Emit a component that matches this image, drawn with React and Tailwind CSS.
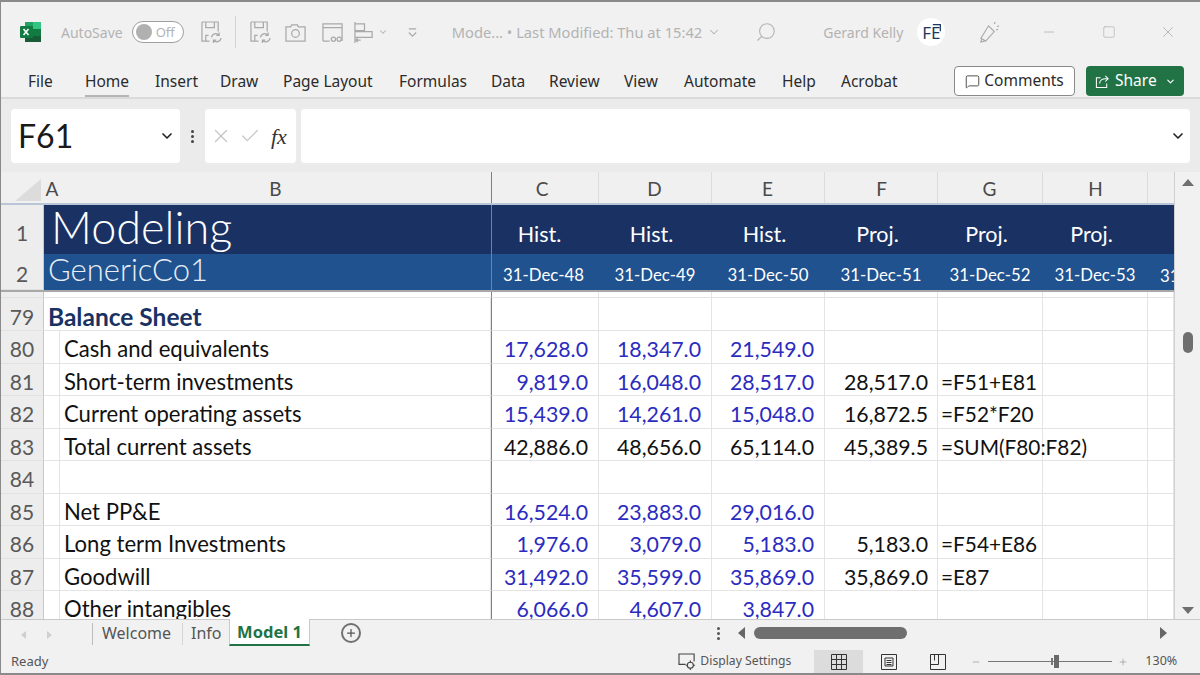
import { ChevronDown, Search, X, Check, Minus, Square, Plus, MessageSquare } from "lucide-react";

const GRID = "grid grid-cols-[43px_16px_431px_108px_113px_113px_113px_105px_105px_26px] shrink-0";
const TABS = [
  ["Home", "w-[70px]"],
  ["Insert", "w-[65px]"],
  ["Draw", "w-[63px]"],
  ["Page Layout", "w-[116px]"],
  ["Formulas", "w-[92px]"],
  ["Data", "w-[58px]"],
  ["Review", "w-[75px]"],
  ["View", "w-[60px]"],
  ["Automate", "w-[98px]"],
  ["Help", "w-[59px]"],
  ["Acrobat", "w-[70px]"],
];

const BLUE = "text-[#2b2bbf]";
const rows = [
  { n: 80, label: "Cash and equivalents", vals: ["17,628.0", "18,347.0", "21,549.0"] },
  { n: 81, label: "Short-term investments", vals: ["9,819.0", "16,048.0", "28,517.0"], f: "28,517.0", g: "=F51+E81" },
  { n: 82, label: "Current operating assets", vals: ["15,439.0", "14,261.0", "15,048.0"], f: "16,872.5", g: "=F52*F20" },
  { n: 83, label: "Total current assets", vals: ["42,886.0", "48,656.0", "65,114.0"], black: true, f: "45,389.5", g: "=SUM(F80:F82)" },
  { n: 84, label: "", vals: ["", "", ""] },
  { n: 85, label: "Net PP&E", vals: ["16,524.0", "23,883.0", "29,016.0"] },
  { n: 86, label: "Long term Investments", vals: ["1,976.0", "3,079.0", "5,183.0"], f: "5,183.0", g: "=F54+E86" },
  { n: 87, label: "Goodwill", vals: ["31,492.0", "35,599.0", "35,869.0"], f: "35,869.0", g: "=E87" },
  { n: 88, label: "Other intangibles", vals: ["6,066.0", "4,607.0", "3,847.0"] },
];

const headers = [
  ["C", "Hist.", "31-Dec-48"],
  ["D", "Hist.", "31-Dec-49"],
  ["E", "Hist.", "31-Dec-50"],
  ["F", "Proj.", "31-Dec-51"],
  ["G", "Proj.", "31-Dec-52"],
  ["H", "Proj.", "31-Dec-53"],
];

function SaveSync({ className }) {
  return (
    <svg viewBox="0 0 22 24" className={className} fill="none" stroke="#a9a9a9" strokeWidth="1.3">
      <path d="M1 1h17v10M1 1v20h8M5 1v6h9V1M5 21v-6h3" />
      <path d="M11 17a4.5 4.5 0 0 1 8-2M21 18a4.5 4.5 0 0 1-8 2M19 12v3h-3M13 23v-3h3" />
    </svg>
  );
}

function Excel() {
  return (
    <svg viewBox="0 0 22 22" className="w-[22px] h-[22px]">
      <rect x="5" y="1" width="16" height="20" rx="1.5" fill="#21a366" />
      <rect x="5" y="1" width="8" height="7" fill="#21a366" />
      <rect x="13" y="1" width="8" height="7" fill="#33c481" />
      <rect x="13" y="8" width="8" height="7" fill="#107c41" />
      <rect x="5" y="15" width="16" height="6" fill="#185c37" />
      <rect x="0" y="5" width="13" height="12" rx="1" fill="#107c41" />
      <path d="M3.5 8l5 6M8.5 8l-5 6" stroke="#fff" strokeWidth="1.6" />
    </svg>
  );
}

function TitleBar() {
  return (
    <div className="h-[58px] shrink-0 flex items-center bg-[#f1f1f1] text-[#b3b3b3] text-[14px] pt-[2px]">
      <div className="ml-[19px]"><Excel /></div>
      <span className="ml-[19px]">AutoSave</span>
      <div className="ml-[9px] w-[52px] h-[22px] rounded-full border border-[#9f9f9f] bg-white flex items-center px-[3px] gap-[4px]">
        <div className="w-[16px] h-[16px] rounded-full bg-[#b0b0b0]" />
        <span className="text-[13px] leading-none">Off</span>
      </div>
      <SaveSync className="ml-[17px] w-[21px] h-[23px]" />
      <div className="ml-[13px] w-px h-[32px] bg-[#d2d2d2]" />
      <SaveSync className="ml-[14px] w-[21px] h-[23px]" />
      <svg viewBox="0 0 22 22" className="ml-[14px] w-[21px] h-[21px]" fill="none" stroke="#a9a9a9" strokeWidth="1.3">
        <path d="M1 5h5l1-2h6l1 2h7v15H1z" />
        <circle cx="11" cy="12" r="4" />
      </svg>
      <svg viewBox="0 0 22 22" className="ml-[16px] w-[21px] h-[21px]" fill="none" stroke="#a9a9a9" strokeWidth="1.3">
        <path d="M1 20V2h20v18M1 6h20M1 20h7" />
        <circle cx="12" cy="18" r="2.2" />
        <circle cx="18" cy="18" r="2.2" />
      </svg>
      <svg viewBox="0 0 22 24" className="ml-[11px] w-[21px] h-[23px]" fill="none" stroke="#a9a9a9" strokeWidth="1.3">
        <path d="M1 1v22M1 3h10v7H1M1 11h18v6H1M7 20H2l2-2M2 20l2 2" />
      </svg>
      <ChevronDown className="ml-[3px] w-[10px] h-[10px]" strokeWidth={2.5} />
      <svg viewBox="0 0 12 12" className="ml-[19px] w-[11px] h-[11px]" fill="none" stroke="#a9a9a9" strokeWidth="1.2">
        <path d="M2 2h8M2 6l4 4 4-4" />
      </svg>
      <span className="ml-[34px] whitespace-nowrap text-[14.7px]">Mode... • Last Modified: Thu at 15:42</span>
      <ChevronDown className="ml-[5px] w-[14px] h-[14px]" strokeWidth={1.8} />
      <Search className="ml-[34px] w-[22px] h-[22px] -scale-x-100" strokeWidth={1.2} />
      <span className="ml-[46px] whitespace-nowrap">Gerard Kelly</span>
      <div className="ml-[14px] w-[28px] h-[28px] rounded-full bg-white flex items-center justify-center text-[#1b3a63] text-[17px] leading-none relative">
        <span>FE</span>
        <svg viewBox="0 0 12 12" className="absolute top-[5px] right-[3px] w-[10px] h-[10px]" fill="none" stroke="#1b3a63" strokeWidth="1.5">
          <path d="M1 2h9v8" />
        </svg>
      </div>
      <svg viewBox="0 0 22 24" className="ml-[34px] w-[21px] h-[23px]" fill="none" stroke="#a9a9a9" strokeWidth="1.2">
        <path d="M10 5l6 6-9 10-5-3zM3 18l-1 4 4-1M16 3l1-2M19 6l2-1M18 9h2" />
      </svg>
      <Minus className="ml-[41px] w-[16px] h-[16px]" strokeWidth={1.2} />
      <Square className="ml-[45px] w-[14px] h-[14px]" strokeWidth={1.2} />
      <X className="ml-[43px] w-[18px] h-[18px]" strokeWidth={1.2} />
    </div>
  );
}

function Ribbon() {
  return (
    <div className="h-[39px] shrink-0 flex items-start pt-[5px] bg-[#f1f1f1] border-b-2 border-[#dadada] text-[#2b2b2b] text-[15.5px]">
      <span className="ml-[27px] mt-[5px] w-[57px]">File</span>
      <div className="flex mt-[5px]">
        {TABS.map(([t, w]) => (
          <div key={t} className={w}>
            <span className={t === "Home" ? "inline-block border-b-2 border-[#b5b5b5] h-[27px] whitespace-nowrap" : "whitespace-nowrap"}>{t}</span>
          </div>
        ))}
      </div>
      <div className="ml-auto flex items-center gap-[11px] mr-[16px] mt-[1px]">
        <div className="w-[121px] h-[30px] rounded-[4px] border border-[#8a8a8a] bg-white flex items-center justify-center gap-[4px]">
          <MessageSquare className="w-[15px] h-[15px]" strokeWidth={1.3} />
          <span>Comments</span>
        </div>
        <div className="w-[98px] h-[30px] rounded-[4px] bg-[#217346] text-white flex items-center pl-[9px]">
          <svg viewBox="0 0 16 16" className="w-[15px] h-[15px]" fill="none" stroke="#fff" strokeWidth="1.1">
            <path d="M6 4H1.5v10.5h11V10" />
            <path d="M5 10c0-3.5 3-5 6-5h3M11 2l3 3-3 3" />
          </svg>
          <span className="ml-[5px]">Share</span>
          <ChevronDown className="ml-[8px] w-[11px] h-[11px]" strokeWidth={2.5} />
        </div>
      </div>
    </div>
  );
}

function FormulaBar() {
  return (
    <div className="h-[73px] shrink-0 bg-[#ebebeb] flex items-start pt-[10px] pl-[10px] pr-[10px]">
      <div className="w-[169px] h-[54px] rounded-[4px] bg-white flex items-center pl-[7px] pr-[5px]">
        <span className="text-[32px] leading-none text-[#1a1a1a] font-[Lato,sans-serif]">F61</span>
        <ChevronDown className="ml-auto w-[16px] h-[16px] text-[#222]" strokeWidth={2.5} />
      </div>
      <div className="w-[25px] h-[54px] flex flex-col items-center justify-center gap-[2px]">
        <div className="w-[3px] h-[3px] rounded-full bg-[#444]" />
        <div className="w-[3px] h-[3px] rounded-full bg-[#444]" />
        <div className="w-[3px] h-[3px] rounded-full bg-[#444]" />
      </div>
      <div className="w-[91px] h-[54px] rounded-[4px] bg-white flex items-center pl-[5px]">
        <X className="w-[22px] h-[22px] text-[#c4c4c4]" strokeWidth={1.3} />
        <Check className="ml-[7px] w-[22px] h-[22px] text-[#c4c4c4]" strokeWidth={1.3} />
        <span className="ml-[10px] text-[22px] italic text-[#333] font-['Liberation_Serif',serif]">fx</span>
      </div>
      <div className="ml-[5px] flex-1 h-[54px] rounded-[4px] bg-white flex items-center justify-end pr-[4px]">
        <ChevronDown className="w-[16px] h-[16px] text-[#222]" strokeWidth={2.5} />
      </div>
    </div>
  );
}

function RowHead({ n, className = "pt-[4px]" }) {
  return (
    <div className={"bg-[#ededed] text-[#595959] text-[21px] leading-none flex items-center justify-center border-b border-[#e2e2e2] border-r border-r-[#c8c8c8] " + className}>
      {n}
    </div>
  );
}

function Cell({ children, className = "" }) {
  return (
    <div className={"border-r border-b border-[#e4e4e4] flex items-center whitespace-nowrap overflow-hidden pt-[5px] leading-[24px] " + className}>
      {children}
    </div>
  );
}

function ColumnHeader() {
  return (
    <div className={GRID + " h-[31px] bg-[#f0f0f0] text-[#4a4a4a] text-[19px]"}>
      <div className="flex items-end justify-end pb-[3px] pr-[3px]">
        <svg viewBox="0 0 26 22" className="w-[26px] h-[22px]"><path d="M26 0v22H0z" fill="#dcdcdc" /></svg>
      </div>
      <div className="flex justify-center items-center pt-[3px]">A</div>
      <div className="flex justify-center items-center pt-[3px]">B</div>
      {headers.map(([l], i) => (
        <div key={l} className={"flex justify-center items-center pt-[3px] border-r border-[#dcdcdc] " + (i === 0 ? "border-l border-l-[#808080] pr-[6px]" : i === 3 || i === 5 ? "pl-[1px]" : "pr-[1px]")}>{l}</div>
      ))}
      <div />
    </div>
  );
}

function TitleRows() {
  return (
    <>
      <div className={GRID + " h-[51px] border-t-2 border-[#b9c6d8]"}>
        <RowHead n={1} className="pt-[5px]" />
        <div className="col-span-2 bg-[#1a3263] text-white text-[45px] font-light leading-none pl-[7px] pb-[6px] flex items-center">Modeling</div>
        {headers.map(([l, t], i) => (
          <div key={l} className={"bg-[#1a3263] text-white text-[21.5px] flex items-center justify-center pt-[8px] " + (i === 0 ? "border-l border-[#808080] pr-[12px]" : "pr-[8px]")}>{t}</div>
        ))}
        <div className="bg-[#1a3263]" />
      </div>
      <div className={GRID + " h-[38px] border-b-2 border-[#a8a8a8]"}>
        <RowHead n={2} className="pt-[3px]" />
        <div className="col-span-2 bg-[#20528f] text-[#e9eef6] text-[31px] font-light leading-none pl-[4px] pb-[5px] flex items-center">GenericCo1</div>
        {headers.map(([l, , d], i) => (
          <div key={l} className={"bg-[#20528f] text-white text-[16.8px] flex items-center justify-center pt-[6px] " + (i === 0 ? "border-l border-[#808080] pr-[4px]" : "pr-[1px]")}>{d}</div>
        ))}
        <div className="bg-[#20528f] text-white text-[16.8px] overflow-hidden pl-[12px] pt-[9px] whitespace-nowrap">31-Dec-54</div>
      </div>
    </>
  );
}

function DataRow({ r }) {
  return (
    <div className={GRID + " h-[32.5px] text-[21.3px] text-[#111]"}>
      <RowHead n={r.n} />
      <Cell />
      <Cell className="pl-[4px] text-[22.1px]">{r.label}</Cell>
      {r.vals.map((v, i) => (
        <Cell key={i} className={"justify-end pr-[10px] " + (r.black ? "" : BLUE + " ") + (i === 0 ? "border-l border-l-[#808080]" : "")}>{v}</Cell>
      ))}
      <Cell className="justify-end pr-[9px]">{r.f}</Cell>
      <div className="border-r border-b border-[#e4e4e4] flex items-center whitespace-nowrap pl-[3px] pt-[5px] leading-[24px] text-[20.8px]">{r.g}</div>
      <Cell />
      <Cell />
    </div>
  );
}

function EmptyCells() {
  return (
    <>
      <div className="border-l border-[#808080] border-r border-r-[#e4e4e4] border-b border-b-[#e4e4e4]" />
      <Cell /><Cell /><Cell /><Cell /><Cell /><Cell />
    </>
  );
}

function Sheet() {
  return (
    <div className="flex-1 min-h-0 flex bg-white font-[Lato,sans-serif]">
      <div className="w-[1173px] shrink-0 overflow-hidden flex flex-col">
        <ColumnHeader />
        <TitleRows />
        <div className={GRID + " h-[6px]"}>
          <RowHead className="" />
          <div className="col-span-2 border-b border-[#e4e4e4]" />
          <div className="border-l border-[#808080] border-r border-r-[#e4e4e4] border-b border-b-[#e4e4e4]" />
          <div className="border-r border-b border-[#e4e4e4]" />
          <div className="border-r border-b border-[#e4e4e4]" />
          <div className="border-r border-b border-[#e4e4e4]" />
          <div className="border-r border-b border-[#e4e4e4]" />
          <div className="border-r border-b border-[#e4e4e4]" />
          <div className="border-r border-b border-[#e4e4e4]" />
        </div>
        <div className={GRID + " h-[33px]"}>
          <RowHead n={79} />
          <Cell className="col-span-2 pl-[4px] text-[24.5px] font-bold text-[#1a3263]">Balance Sheet</Cell>
          <EmptyCells />
        </div>
        {rows.map((r) => <DataRow key={r.n} r={r} />)}
      </div>
      <div className="flex-1 bg-[#f1f1f1] flex flex-col items-center pt-[7px] border-l border-[#cfcfcf]">
        <div className="w-0 h-0 border-x-[6px] border-x-transparent border-b-[7px] border-b-[#6f6f6f]" />
        <div className="mt-[146px] w-[10px] h-[21px] rounded-full bg-[#6f6f6f]" />
        <div className="mt-auto mb-[5px] w-0 h-0 border-x-[6px] border-x-transparent border-t-[7px] border-t-[#6f6f6f]" />
      </div>
    </div>
  );
}

function SheetTabs() {
  return (
    <div className="h-[31px] shrink-0 bg-[#f1f1f1] flex items-start text-[#555] text-[16px] border-t border-[#c9c9c9]">
      <div className="ml-[20px] mt-[11px] w-0 h-0 border-y-[4px] border-y-transparent border-r-[5px] border-r-[#cfcfcf]" />
      <div className="ml-[21px] mt-[11px] w-0 h-0 border-y-[4px] border-y-transparent border-l-[5px] border-l-[#cfcfcf]" />
      <div className="ml-[40px] mt-[3px] w-px h-[22px] bg-[#bdbdbd]" />
      <span className="ml-[9px] mt-[1px] w-[80px]">Welcome</span>
      <div className="mt-[3px] w-px h-[22px] bg-[#d5d5d5]" />
      <span className="ml-[8px] mt-[1px] w-[38px]">Info</span>
      <div className="w-[81px] h-[27px] -mt-px bg-white border-x border-[#c9c9c9] border-b-2 border-b-[#217346] text-center text-[#217346] font-bold leading-[26px] text-[16.5px]">Model 1</div>
      <div className="ml-[31px] mt-[3px] w-[20px] h-[20px] rounded-full border-2 border-[#707070] flex items-center justify-center">
        <Plus className="w-[12px] h-[12px] text-[#555]" strokeWidth={2.5} />
      </div>
      <div className="ml-[356px] mt-[7px] flex flex-col gap-[2px]">
        <div className="w-[3px] h-[3px] rounded-full bg-[#555]" />
        <div className="w-[3px] h-[3px] rounded-full bg-[#555]" />
        <div className="w-[3px] h-[3px] rounded-full bg-[#555]" />
      </div>
      <div className="ml-[18px] mt-[7px] w-0 h-0 border-y-[6px] border-y-transparent border-r-[7px] border-r-[#666]" />
      <div className="ml-[9px] mt-[7px] w-[153px] h-[12px] rounded-full bg-[#6f6f6f]" />
      <div className="ml-[253px] mt-[7px] w-0 h-0 border-y-[6px] border-y-transparent border-l-[7px] border-l-[#666]" />
    </div>
  );
}

function StatusBar() {
  return (
    <div className="h-[23px] shrink-0 bg-[#f1f1f1] flex items-center text-[#555] text-[12.5px] border-b-2 border-[#8a8a8a] box-content">
      <span className="ml-[10px] text-[13px]">Ready</span>
      <svg viewBox="0 0 20 18" className="ml-[630px] w-[19px] h-[17px]" fill="none" stroke="#444" strokeWidth="1.2">
        <path d="M8 12H1V1h16v8" />
        <circle cx="13" cy="13" r="3.2" />
        <path d="M13 8v2M13 16v2M8 13h2M16 13h2" />
      </svg>
      <span className="ml-[3px] w-[91px] whitespace-nowrap text-[12.2px]">Display Settings</span>
      <div className="ml-[23px] w-[49px] h-[23px] bg-[#dcdcdc] flex items-center justify-center">
        <svg viewBox="0 0 16 16" className="w-[16px] h-[16px]" fill="none" stroke="#333" strokeWidth="1">
          <path d="M.5.5h15v15H.5zM5.5.5v15M10.5.5v15M.5 5.5h15M.5 10.5h15" />
        </svg>
      </div>
      <svg viewBox="0 0 16 16" className="ml-[18px] w-[16px] h-[16px]" fill="none" stroke="#333" strokeWidth="1">
        <path d="M.5.5h15v15H.5zM4 4h8v8H4zM5.5 6.5h5M5.5 8.5h5M5.5 10.5h5" />
      </svg>
      <svg viewBox="0 0 16 16" className="ml-[33px] w-[16px] h-[16px]" fill="none" stroke="#333" strokeWidth="1">
        <path d="M.5.5h15v15H.5zM.5 10.5h8v-10M4.5.5v6" />
      </svg>
      <Minus className="ml-[25px] w-[10px] h-[10px] text-[#777]" strokeWidth={1.2} />
      <div className="ml-[7px] w-[124px] h-px bg-[#777] flex items-center">
        <div className="ml-[63px] w-[2px] h-[7px] bg-[#777]" />
        <div className="ml-[1px] w-[5px] h-[13px] bg-[#6a6a6a]" />
      </div>
      <Plus className="ml-[6px] w-[10px] h-[10px] text-[#777]" strokeWidth={1.2} />
      <span className="ml-[17px]">130%</span>
    </div>
  );
}

export default function App() {
  return (
    <div className="w-[1200px] h-[675px] overflow-hidden flex flex-col border-t-2 border-l border-[#8a8a8a] font-['Noto_Sans',sans-serif]">
      <TitleBar />
      <Ribbon />
      <FormulaBar />
      <Sheet />
      <SheetTabs />
      <StatusBar />
    </div>
  );
}
